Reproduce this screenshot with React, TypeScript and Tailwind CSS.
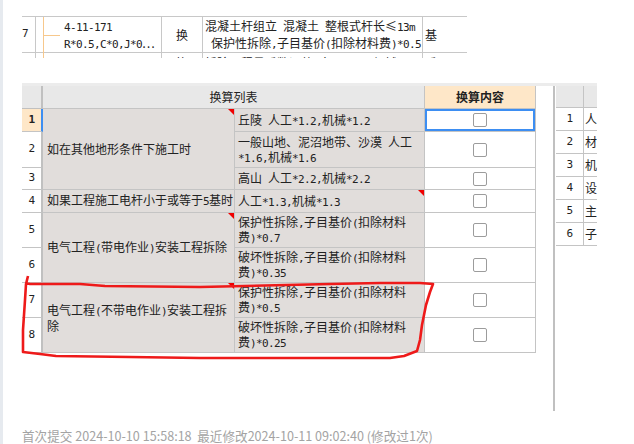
import React from "react";

// splits text so ascii runs get the narrow mono face, like the half-width glyphs in the grid
const Txt = ({ s }: { s: string }) => {
  const parts = s.split(/([\x20-\x7e]+)/).filter((p) => p !== "");
  return (
    <>
      {parts.map((p, i) =>
        /^[\x20-\x7e]+$/.test(p) ? (
          <span key={i} className="font-['DejaVu_Sans_Mono',monospace] text-[11px] tracking-[-0.62px]">
            {p}
          </span>
        ) : (
          <span key={i}>{p}</span>
        ),
      )}
    </>
  );
};

const Lines = ({ lines }: { lines: string[] }) => (
  <div className="whitespace-pre">
    {lines.map((l, i) => (
      <div key={i}>
        <Txt s={l} />
      </div>
    ))}
  </div>
);

const Corner = () => (
  <div className="absolute right-0 top-0 h-0 w-0 border-l-[6px] border-t-[6px] border-l-transparent border-t-[#f00000]" />
);

const Check = () => (
  <div className="h-[14px] w-[14px] rounded-[2px] border border-[#9c9c9c] bg-white" />
);

const cell = "relative border-r border-b border-[#c4c4c4]";

type Row = {
  n: number;
  cat?: { lines: string[]; span: string; mark?: boolean };
  item: string[];
  mark?: boolean;
};

const rows: Row[] = [
  { n: 1, cat: { lines: ["如在其他地形条件下施工时"], span: "row-span-3", mark: true }, item: ["丘陵 人工*1.2,机械*1.2"] },
  { n: 2, item: ["一般山地、泥沼地带、沙漠 人工", "*1.6,机械*1.6"] },
  { n: 3, item: ["高山 人工*2.2,机械*2.2"] },
  { n: 4, cat: { lines: ["如果工程施工电杆小于或等于5基时"], span: "row-span-1" }, item: ["人工*1.3,机械*1.3"], mark: true },
  { n: 5, cat: { lines: ["电气工程(带电作业)安装工程拆除"], span: "row-span-2", mark: true }, item: ["保护性拆除,子目基价(扣除材料", "费)*0.7"] },
  { n: 6, item: ["破坏性拆除,子目基价(扣除材料", "费)*0.35"] },
  { n: 7, cat: { lines: ["电气工程(不带电作业)安装工程拆", "除"], span: "row-span-2", mark: true }, item: ["保护性拆除,子目基价(扣除材料", "费)*0.5"] },
  { n: 8, item: ["破坏性拆除,子目基价(扣除材料", "费)*0.25"] },
];

const sideRows = ["人工费", "材料费", "机械费", "设备费", "主材费", "子目费"];

const TopTable = () => (
  <div className="h-[42px] w-[445px] overflow-hidden border-t border-[#c8c8c8] text-[12px] text-[#222]">
    <div className="flex h-[36px] border-b border-[#c8c8c8]">
      <div className="flex w-[14px] items-center border-r border-[#c8c8c8]">
        <Txt s="7" />
      </div>
      <div className="relative flex w-[126px] items-center border-r border-[#c8c8c8]">
        <div className="absolute left-[7px] top-0 h-[42px] w-px bg-[#f7c88c]" />
        <div className="absolute left-[7px] top-[18px] h-px w-[17px] bg-[#f7c88c]" />
        <div className="pl-[28px] leading-[15px]">
          <Lines lines={["4-11-171", "R*0.5,C*0,J*0…"]} />
        </div>
      </div>
      <div className="flex w-[41px] items-center justify-center border-r border-[#c8c8c8]">换</div>
      <div className="flex w-[220px] items-center border-r border-[#c8c8c8] pl-[2px] leading-[15px]">
        <Lines lines={["混凝土杆组立 混凝土 整根式杆长≤13m", " 保护性拆除,子目基价(扣除材料费)*0.5"]} />
      </div>
      <div className="flex flex-1 items-center pl-[2px]">基</div>
    </div>
    <div className="flex h-[20px] leading-[14px]">
      <div className="w-[14px] border-r border-[#c8c8c8]" />
      <div className="relative w-[126px] border-r border-[#c8c8c8]">
        <div className="absolute left-[7px] top-0 h-[20px] w-px bg-[#f7c88c]" />
      </div>
      <div className="flex w-[41px] justify-center border-r border-[#c8c8c8] pt-[3px]">换</div>
      <div className="w-[220px] border-r border-[#c8c8c8] pl-[2px] pt-[3px] whitespace-pre">
        <Txt s="拆除工程量系数调整 人工*1.5,机械" />
      </div>
      <div className="flex-1 pl-[2px] pt-[3px]">系</div>
    </div>
  </div>
);

const MainGrid = () => (
  <div className="grid grid-cols-[21px_192px_190px_111px] grid-rows-[23px_23px_36px_22px_23px_35px_35px_35px_35px] text-[12px] text-[#222]">
    <div className="border-r-2 border-b border-[#c0c0c0] bg-[#e8e8e8]" />
    <div className={`${cell} col-span-2 flex items-center justify-center bg-[#e8e8e8]`}>换算列表</div>
    <div className={`${cell} flex items-center justify-center bg-[#fee7c8] font-bold`}>换算内容</div>
    {rows.map((r) => (
      <React.Fragment key={r.n}>
        <div
          className={
            r.n === 1
              ? "flex items-center justify-center border-r-2 border-b border-r-[#3d8ef2] border-b-[#c4c4c4] bg-[#fee7c8] font-bold"
              : "flex items-center justify-center border-r-2 border-b border-r-[#c0c0c0] border-b-[#c4c4c4] bg-white"
          }
        >
          <Txt s={String(r.n)} />
        </div>
        {r.cat && (
          <div className={`${cell} ${r.cat.span} flex items-center bg-[#e1dddb] pl-[4px] leading-[14px]`}>
            {r.cat.mark && <Corner />}
            <Lines lines={r.cat.lines} />
          </div>
        )}
        <div className={`${cell} flex items-center bg-[#e1dddb] pl-[3px] leading-[13px]`}>
          {r.mark && <Corner />}
          <Lines lines={r.item} />
        </div>
        <div
          className={`${cell} flex items-center justify-center bg-white ${
            r.n === 1 ? "shadow-[inset_0_0_0_2px_#3d8ef2]" : ""
          }`}
        >
          <Check />
        </div>
      </React.Fragment>
    ))}
  </div>
);

const SideTable = () => (
  <div className="w-[41px] overflow-hidden text-[12px] text-[#222]">
    <div className="flex h-[22px] bg-[#e8e8e8] border-b border-[#c4c4c4]">
      <div className="w-[28px] border-r border-[#c4c4c4]" />
    </div>
    {sideRows.map((s, i) => (
      <div key={s} className="flex h-[23px] border-b border-[#c4c4c4]">
        <div className="flex w-[28px] shrink-0 items-center justify-center border-r border-[#c4c4c4]">
          <Txt s={String(i + 1)} />
        </div>
        <div className="flex items-center whitespace-nowrap pl-[1px]">{s}</div>
      </div>
    ))}
  </div>
);

export default function App() {
  return (
    <div className="relative flex h-[444px] w-[634px] overflow-hidden bg-white font-['Noto_Sans_CJK_SC',sans-serif]">
      <div className="h-full w-[3px] bg-[#e6eaef]" />
      <div className="flex flex-col pl-[19px] pt-[16px]">
        <TopTable />
        <div className="mt-[25px] flex w-[575px] border-t-[3px] border-[#ececec]">
          <MainGrid />
          <div className="w-[17px]" />
          <div className="h-[325px] w-[2px] bg-[#c0c0c0]" />
          <div className="w-px" />
          <SideTable />
        </div>
        <div className="mt-[17px] h-[15px] whitespace-pre text-[12.6px] leading-[15px] text-[#a3a3a3]">
          首次提交 2024-10-10 15:58:18  最近修改2024-10-11 09:02:40 (修改过1次)
        </div>
      </div>
      <svg className="pointer-events-none absolute left-0 top-0" width="634" height="444">
        <path
          d="M28 276 L26 284 L25 300 L23 330 L23 352 L40 354 L56 356 L130 357 L200 358 L390 358 L404 356 L417 351 L420 340 L422 325 L426 305 L430 292 L433 284 L420 283 L380 283 L330 284 L200 287 L105 286 L80 284 L30 284 L25 283"
          fill="none"
          stroke="#ee1a1a"
          strokeWidth="2.6"
          strokeLinejoin="round"
        />
      </svg>
    </div>
  );
}
